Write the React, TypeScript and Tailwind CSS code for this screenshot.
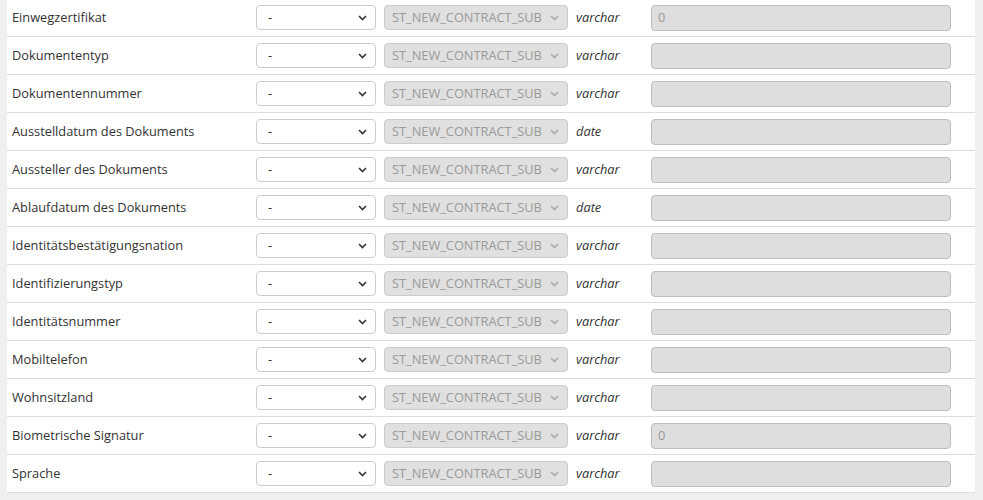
import React from 'react'

type Field = { label: string; type: string; value?: string }

const fields: Field[] = [
  { label: 'Einwegzertifikat', type: 'varchar', value: '0' },
  { label: 'Dokumententyp', type: 'varchar' },
  { label: 'Dokumentennummer', type: 'varchar' },
  { label: 'Ausstelldatum des Dokuments', type: 'date' },
  { label: 'Aussteller des Dokuments', type: 'varchar' },
  { label: 'Ablaufdatum des Dokuments', type: 'date' },
  { label: 'Identitätsbestätigungsnation', type: 'varchar' },
  { label: 'Identifizierungstyp', type: 'varchar' },
  { label: 'Identitätsnummer', type: 'varchar' },
  { label: 'Mobiltelefon', type: 'varchar' },
  { label: 'Wohnsitzland', type: 'varchar' },
  { label: 'Biometrische Signatur', type: 'varchar', value: '0' },
  { label: 'Sprache', type: 'varchar' },
]

function Chevron({ color }: { color: string }) {
  return (
    <svg width="9" height="6" viewBox="0 0 9 6" fill="none">
      <path d="M1 1l3.5 3.5L8 1" stroke={color} strokeWidth="1.6" />
    </svg>
  )
}

export default function App() {
  return (
    <div
      className="min-h-[500px] bg-[#efefef] pl-[7px] pr-[8px] overflow-hidden"
      style={{ fontFamily: '"Open Sans", "Liberation Sans", sans-serif' }}
    >
      <div className="bg-white -mt-[1px]">
        {fields.map((f) => (
          <div
            key={f.label}
            className="flex items-center h-[38px] border-b border-[#dddddd] pl-[5px] text-[12.8px] text-[#333]"
          >
            <div className="w-[244px] shrink-0">{f.label}</div>
            <div className="w-[120px] h-[25px] shrink-0 flex items-center justify-between rounded-[4px] border border-[#cccccc] bg-white pl-[11px] pr-[8px]">
              <span>-</span>
              <Chevron color="#333" />
            </div>
            <div className="ml-[8px] w-[184px] h-[25px] shrink-0 flex items-center justify-between rounded-[4px] border border-[#cccccc] bg-[#e0e0e0] pl-[7px] pr-[8px] text-[#9a9a9a]">
              <span>ST_NEW_CONTRACT_SUB</span>
              <Chevron color="#aaa" />
            </div>
            <div className="ml-[8px] w-[75px] shrink-0 italic">{f.type}</div>
            <div className="w-[300px] h-[26px] shrink-0 flex items-center rounded-[4px] border border-[#bdbdbd] bg-[#dedede] px-[6px] text-[#999]">
              {f.value ?? ''}
            </div>
          </div>
        ))}
      </div>
    </div>
  )
}
